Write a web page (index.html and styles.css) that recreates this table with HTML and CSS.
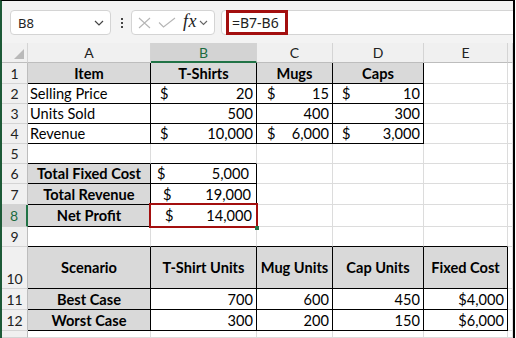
FILE: index.html
```html
<!DOCTYPE html>
<html>
<head>
<meta charset="utf-8">
<title>Sheet</title>
<link rel="stylesheet" href="styles.css">
</head>
<body>
<div class="frame">
  <div class="fbar">
    <div class="namebox">
      <span class="nb-text">B8</span>
      <svg class="nb-chev" width="10" height="6" viewBox="0 0 10 6"><path d="M1 1l4 4 4-4"/></svg>
    </div>
    <div class="vdots"><i></i><i></i><i></i></div>
    <div class="fxbox">
      <svg class="ic-x" width="13" height="12" viewBox="0 0 13 12"><path d="M1 1L12 11M12 1L1 11"/></svg>
      <svg class="ic-check" width="18" height="11" viewBox="0 0 18 11"><path d="M1 5.5L5.5 10 17 1"/></svg>
      <span class="fx">fx</span>
      <svg class="ic-chev" width="9" height="6" viewBox="0 0 9 6"><path d="M1 1l3.5 3.5L8 1"/></svg>
    </div>
    <div class="formula"><span class="fml">=B7-B6</span></div>
  </div>

  <div class="sheet">
    <div class="corner"><span class="tri"></span></div>
    <div class="ch">A</div>
    <div class="ch sel">B</div>
    <div class="ch">C</div>
    <div class="ch">D</div>
    <div class="ch">E</div>
    <div class="ch"></div>

    <div class="rh">1</div>
    <div class="c t hd">Item</div>
    <div class="c t hd">T-Shirts</div>
    <div class="c t hd">Mugs</div>
    <div class="c t hd">Caps</div>
    <div class="c"></div>
    <div class="c"></div>

    <div class="rh">2</div>
    <div class="c t txt">Selling Price</div>
    <div class="c t acct pb"><span>$</span><span>20</span></div>
    <div class="c t acct pc"><span>$</span><span>15</span></div>
    <div class="c t acct pd"><span>$</span><span>10</span></div>
    <div class="c"></div>
    <div class="c"></div>

    <div class="rh">3</div>
    <div class="c t txt">Units Sold</div>
    <div class="c t num">500</div>
    <div class="c t num">400</div>
    <div class="c t num">300</div>
    <div class="c"></div>
    <div class="c"></div>

    <div class="rh">4</div>
    <div class="c t txt">Revenue</div>
    <div class="c t acct pb"><span>$</span><span>10,000</span></div>
    <div class="c t acct pc"><span>$</span><span>6,000</span></div>
    <div class="c t acct pd"><span>$</span><span>3,000</span></div>
    <div class="c"></div>
    <div class="c"></div>

    <div class="rh">5</div>
    <div class="c bb"></div>
    <div class="c bb"></div>
    <div class="c"></div>
    <div class="c"></div>
    <div class="c"></div>
    <div class="c"></div>

    <div class="rh">6</div>
    <div class="c t lab">Total Fixed Cost</div>
    <div class="c t acct p6"><span>$</span><span>5,000</span></div>
    <div class="c"></div>
    <div class="c"></div>
    <div class="c"></div>
    <div class="c"></div>

    <div class="rh">7</div>
    <div class="c t lab">Total Revenue</div>
    <div class="c t acct p7"><span>$</span><span>19,000</span></div>
    <div class="c"></div>
    <div class="c"></div>
    <div class="c"></div>
    <div class="c"></div>

    <div class="rh rsel">8</div>
    <div class="c t lab">Net Profit</div>
    <div class="c t acct p8 active"><span>$</span><span>14,000</span><i class="handle"></i></div>
    <div class="c"></div>
    <div class="c"></div>
    <div class="c"></div>
    <div class="c"></div>

    <div class="rh">9</div>
    <div class="c bb"></div>
    <div class="c bb"></div>
    <div class="c bb"></div>
    <div class="c bb"></div>
    <div class="c bb"></div>
    <div class="c"></div>

    <div class="rh tall">10</div>
    <div class="c t hd">Scenario</div>
    <div class="c t hd">T-Shirt Units</div>
    <div class="c t hd">Mug Units</div>
    <div class="c t hd">Cap Units</div>
    <div class="c t hd">Fixed Cost</div>
    <div class="c"></div>

    <div class="rh">11</div>
    <div class="c t lab">Best Case</div>
    <div class="c t num">700</div>
    <div class="c t num">600</div>
    <div class="c t num">450</div>
    <div class="c t num">$4,000</div>
    <div class="c"></div>

    <div class="rh">12</div>
    <div class="c t lab">Worst Case</div>
    <div class="c t num">300</div>
    <div class="c t num">200</div>
    <div class="c t num">150</div>
    <div class="c t num">$6,000</div>
    <div class="c"></div>

    <div class="rh"></div>
    <div class="c"></div>
    <div class="c"></div>
    <div class="c"></div>
    <div class="c"></div>
    <div class="c"></div>
    <div class="c"></div>
  </div>
</div>
</body>
</html>
```

FILE: styles.css
```css
* { box-sizing: border-box; margin: 0; padding: 0; }
html, body { width: 516px; height: 338px; overflow: hidden; background: #fff; }
body { font-family: "Lato", "Liberation Sans", sans-serif; color: #000; }

.frame {
  width: 515px;
  height: 338px;
  border-top: 1px solid #000;
  border-left: 2px solid #1d5a37;
  border-right: 2px solid #000;
  display: flex;
  flex-direction: column;
  overflow: hidden;
}

/* formula bar */
.fbar {
  height: 42px;
  flex: none;
  background: #f3f3f3;
  display: flex;
  align-items: flex-start;
  padding: 9px 0 0 8px;
  font-family: "Noto Sans", "Open Sans", sans-serif;
}
.namebox {
  width: 101px;
  height: 25px;
  background: #fff;
  border: 1px solid #d4d4d4;
  border-radius: 4px;
  display: flex;
  align-items: center;
  justify-content: space-between;
  padding: 0 6px 0 7px;
  font-size: 13px;
  color: #222;
}
.nb-chev path { fill: none; stroke: #444; stroke-width: 1.2; }
.vdots {
  margin: 8px 0 0 10px;
  display: flex;
  flex-direction: column;
  gap: 2px;
}
.vdots i { display: block; width: 2px; height: 2px; background: #444; }
.fxbox {
  margin-left: 8px;
  width: 84px;
  height: 25px;
  background: #fff;
  border: 1px solid #d4d4d4;
  border-radius: 4px;
  display: flex;
  align-items: center;
  padding-left: 6px;
}
.ic-x path, .ic-check path { fill: none; stroke: #b5b5b5; stroke-width: 1.1; }
.ic-x { margin-right: 7px; }
.ic-check { margin-right: 7px; }
.fx {
  font-family: "Liberation Serif", "DejaVu Serif", serif;
  font-style: italic;
  font-size: 18px;
  color: #222;
  margin-top: -2px;
  letter-spacing: 0.5px;
}
.ic-chev { margin-left: 2px; }
.ic-chev path { fill: none; stroke: #666; stroke-width: 1.1; }
.formula {
  margin-left: 6px;
  flex: 1;
  margin-right: -6px;
  height: 25px;
  background: #fff;
  border: 1px solid #d4d4d4;
  border-radius: 4px 0 0 4px;
  padding-left: 4px;
}
.fml {
  display: inline-flex;
  align-items: center;
  height: 25px;
  margin-top: -1px;
  width: 62px;
  border: 3px solid #a30f0f;
  padding-left: 3px;
  font-size: 14px;
  color: #222;
}

/* sheet grid */
.sheet {
  flex: 1;
  display: grid;
  grid-template-columns: 26px 123px 106px 76px 91px 84px 1fr;
  grid-template-rows: 20px 21px 20px 20px 20px 20px 20px 21px 22px 20px 42px 21px 21px 1fr;
  font-size: 14.6px;
}
.corner {
  background: #f0f0f0;
  border-right: 1px solid #d4d4d4;
  border-bottom: 1px solid #bdbdbd;
  position: relative;
}
.tri {
  position: absolute;
  right: 3px;
  bottom: 3px;
  width: 0;
  height: 0;
  border-left: 10px solid transparent;
  border-bottom: 10px solid #b9b9b9;
}
.ch {
  background: #f0f0f0;
  border-right: 1px solid #d4d4d4;
  border-bottom: 1px solid #bdbdbd;
  display: flex;
  align-items: center;
  justify-content: center;
  color: #222;
  font-size: 14px;
}
.ch.sel {
  background: #d3d3d3;
  color: #1b6b3f;
  border-bottom: 2px solid #217346;
}
.rh {
  background: #f0f0f0;
  border-right: 1px solid #bdbdbd;
  border-bottom: 1px solid #d4d4d4;
  display: flex;
  align-items: center;
  justify-content: center;
  color: #222;
  font-size: 14px;
}
.rh.tall { align-items: flex-end; padding-bottom: 1px; }
.rh.rsel {
  background: #d3d3d3;
  color: #1b6b3f;
  border-right: 2px solid #217346;
}

.c {
  border-right: 1px solid #dcdcdc;
  border-bottom: 1px solid #dcdcdc;
  display: flex;
  align-items: center;
  white-space: nowrap;
  overflow: hidden;
}
.c.t { border-right-color: #000; border-bottom-color: #000; }
.c.bb { border-bottom-color: #000; }
.hd {
  background: #d9d9d9;
  font-weight: 700;
  justify-content: center;
}
.lab {
  background: #d9d9d9;
  font-weight: 700;
  justify-content: center;
}
.txt { padding-left: 2px; }
.num { justify-content: flex-end; padding-right: 3px; }
.acct { justify-content: space-between; }
.pb { padding: 0 3px 0 9px; }
.pc { padding: 0 3px 0 10px; }
.pd { padding: 0 3px 0 9px; }
.p6 { padding: 0 7px 0 6px; }
.p7 { padding: 0 5px 0 12px; }
.p8 { padding: 0 4px 0 14px; }

.active { position: relative; overflow: visible; }
.active::after {
  content: "";
  position: absolute;
  left: -2px;
  top: -2px;
  right: -2px;
  bottom: -2px;
  border: 2.5px solid #a30f0f;
  pointer-events: none;
}
.handle {
  position: absolute;
  right: -3px;
  bottom: -4px;
  width: 4px;
  height: 4px;
  background: #217346;
  z-index: 2;
}
```
